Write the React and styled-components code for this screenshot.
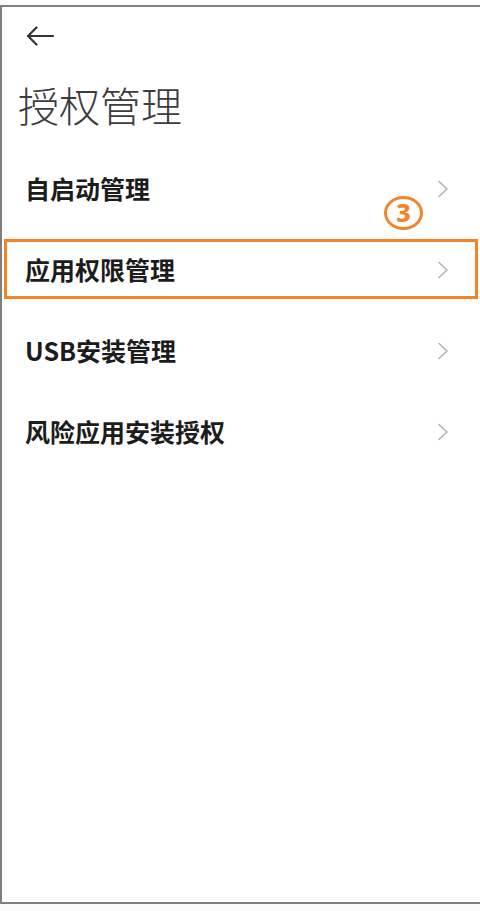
import React from "react";
import styled, { createGlobalStyle } from "styled-components";

const GlobalStyle = createGlobalStyle`
  html, body {
    margin: 0;
    padding: 0;
    background: #fdfafa;
  }
  body {
    font-family: "Noto Sans CJK SC", "Noto Sans", sans-serif;
  }
`;

const Page = styled.div`
  height: 911px;
  padding-top: 5px;
  box-sizing: border-box;
`;

const Frame = styled.div`
  height: 899px;
  box-sizing: border-box;
  background: #fff;
  border-top: 2px solid #7f7f7f;
  border-left: 2px solid #7f7f7f;
  border-bottom: 2px solid #7f7f7f;
  display: flex;
  flex-direction: column;
`;

const TopBar = styled.div`
  height: 58px;
  display: flex;
  align-items: center;
  padding-left: 23px;
`;

const BackButton = styled.button`
  border: 0;
  background: none;
  padding: 0;
  width: 30px;
  height: 20px;
  display: flex;
  align-items: center;
  cursor: pointer;
`;

const Title = styled.h1`
  margin: 11px 0 0 0;
  padding-left: 16px;
  height: 56px;
  font-size: 41px;
  line-height: 56px;
  font-weight: 300;
  color: #3c3c3c;
`;

const List = styled.ul`
  list-style: none;
  margin: 16px 0 0 0;
  padding: 0;
`;

const Row = styled.li`
  position: relative;
  height: 81px;
  display: flex;
  align-items: center;
  justify-content: space-between;
  padding: 0 31px 0 23px;
`;

const Label = styled.span`
  font-size: 25px;
  font-weight: 700;
  color: #1c1c1c;
  line-height: 1;
`;

const Highlight = styled.div`
  position: absolute;
  top: 10px;
  bottom: 11px;
  left: 2px;
  right: 2px;
  border: 3px solid #f5832a;
  pointer-events: none;
`;

const StepBadge = styled.div`
  position: absolute;
  top: -33px;
  right: 57px;
  width: 39px;
  height: 34px;
  box-sizing: border-box;
  border: 3px solid #f5832a;
  border-radius: 50%;
  display: flex;
  align-items: center;
  justify-content: center;
  color: #f5832a;
  font-family: "Noto Sans", "Open Sans", sans-serif;
  font-weight: 800;
  font-size: 25px;
  line-height: 1;
  padding-bottom: 1px;
`;

const Chevron = () => (
  <svg width="12" height="18" viewBox="0 0 12 18">
    <polyline
      points="2,1.5 10,9 2,16.5"
      fill="none"
      stroke="#b3b3b3"
      strokeWidth="1.6"
      strokeLinecap="round"
      strokeLinejoin="round"
    />
  </svg>
);

const BackArrow = () => (
  <svg width="30" height="20" viewBox="0 0 30 20">
    <path
      d="M28 10H3M11.5 1.5L3 10l8.5 8.5"
      fill="none"
      stroke="#333"
      strokeWidth="2.2"
      strokeLinecap="round"
      strokeLinejoin="round"
    />
  </svg>
);

const items = [
  { label: "自启动管理" },
  { label: "应用权限管理", marked: true },
  { label: "USB安装管理" },
  { label: "风险应用安装授权" },
];

export default function App() {
  return (
    <Page>
      <GlobalStyle />
      <Frame>
        <TopBar>
          <BackButton aria-label="返回">
            <BackArrow />
          </BackButton>
        </TopBar>
        <Title>授权管理</Title>
        <List>
          {items.map((item) => (
            <Row key={item.label}>
              <Label>{item.label}</Label>
              <Chevron />
              {item.marked && (
                <>
                  <Highlight />
                  <StepBadge>3</StepBadge>
                </>
              )}
            </Row>
          ))}
        </List>
      </Frame>
    </Page>
  );
}
